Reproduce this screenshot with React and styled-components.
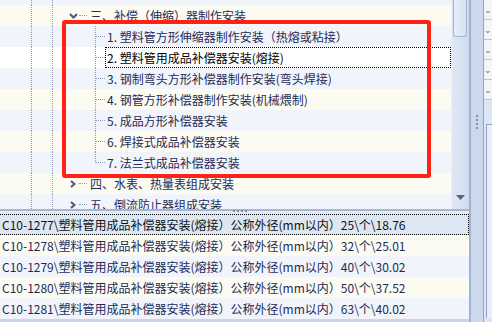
import React from 'react'
import styled, {createGlobalStyle} from 'styled-components'

const GlobalStyle = createGlobalStyle`
  html, body {
    margin: 0;
    padding: 0;
    background: #fff;
  }
  body {
    font-family: "Noto Sans CJK SC", "Liberation Sans", sans-serif;
    font-size: 12px;
  }
`

const stripe = {
  blue: '#f1f4fb',
  beige: '#fbfbf2',
  selected: '#ffffff',
}

const Window = styled.div`
  position: relative;
  display: flex;
  width: 492px;
  height: 322px;
  overflow: hidden;
  background: #cfdcee;
`

const MainPane = styled.div`
  display: flex;
  flex-direction: column;
  width: 473px;
  border-right: 2px solid #a2b3d0;
  background: #fff;
`

const TreePane = styled.div`
  display: flex;
  height: 209px;
`

const TreeBody = styled.div`
  flex: 1;
  overflow: hidden;
`

/* scroll offset of the tree, first row is half hidden */
const TreeScroll = styled.div`
  margin-top: -16px;
`

const TreeRow = styled.div`
  display: flex;
  align-items: center;
  height: 21px;
  background: ${p => stripe[p.$tone]};
  color: #1d2c58;
  white-space: nowrap;
`

const Blank = styled.span`
  flex: none;
  width: ${p => p.$w}px;
  align-self: stretch;
`

const Guide = styled.span`
  flex: none;
  width: ${p => p.$w}px;
  align-self: stretch;
  border-left: 1px dotted #8d9cc2;
  box-sizing: border-box;
`

const Expander = styled.span`
  flex: none;
  display: flex;
  align-items: center;
  justify-content: flex-end;
  width: 26px;
  height: 21px;
  padding-right: 1px;
  box-sizing: border-box;
`

const Stub = styled.span`
  flex: none;
  width: 8px;
  margin-right: 1px;
  border-top: 1px dotted #8d9cc2;
`

const Branch = styled.span`
  flex: none;
  position: relative;
  width: 10px;
  align-self: stretch;

  &::before {
    content: '';
    position: absolute;
    left: 0;
    top: 0;
    height: ${p => (p.$last ? '11px' : '100%')};
    border-left: 1px dotted #8d9cc2;
  }
  &::after {
    content: '';
    position: absolute;
    left: 1px;
    top: 10px;
    width: 9px;
    border-top: 1px dotted #8d9cc2;
  }
`

const Label = styled.span`
  flex: ${p => (p.$selected ? 1 : 'none')};
  display: flex;
  align-items: center;
  align-self: stretch;
  padding-left: 1px;
  border: 1px dotted ${p => (p.$selected ? '#000' : 'transparent')};
  color: ${p => (p.$selected ? '#000' : 'inherit')};
`

const ScrollBar = styled.div`
  flex: none;
  display: flex;
  flex-direction: column;
  width: 17px;
  background: linear-gradient(to right, #dfe8f4, #d0dcee);
  border-left: 1px solid #e9eff8;
`

const Thumb = styled.div`
  height: 36px;
  margin: 0 2px 0 1px;
  border: 1px solid #a3b5d4;
  border-top: none;
  border-radius: 0 0 3px 3px;
  background: linear-gradient(to right, #e7eef8, #d6e1f1);
`

const ScrollEnd = styled.div`
  margin-top: auto;
  height: 14px;
  display: flex;
  justify-content: center;
  align-items: flex-start;
`

const HSplitter = styled.div`
  display: flex;
  justify-content: center;
  height: 3px;
  border-top: 2px solid #a6b6d2;
  background: #e4ebf5;
  padding-left: 10px;
`

const Grip = styled.div`
  display: flex;
  flex-direction: ${p => (p.$vertical ? 'column' : 'row')};
  gap: 2px;
  margin-top: ${p => (p.$vertical ? '115px' : '-1px')};
  & > i {
    display: block;
    width: 2px;
    height: 2px;
    background: #7e92b8;
  }
`

const ListPane = styled.div`
  flex: 1;
  display: flex;
  flex-direction: column;
  background: #f1f4fb;
  border-bottom: 3px solid #c9d6ea;
`

const ListRow = styled.div`
  display: flex;
  align-items: center;
  height: 21px;
  padding-left: 2px;
  box-sizing: border-box;
  background: ${p => (p.$selected ? '#dde7f4' : stripe[p.$tone])};
  border: 1px dotted ${p => (p.$selected ? '#000' : 'transparent')};
  border-left-width: 0;
  color: ${p => (p.$selected ? '#111' : '#1d2c58')};
  white-space: nowrap;
`

const VSplitter = styled.div`
  flex: none;
  display: flex;
  justify-content: center;
  width: 12px;
  background: #ccd9ec;
  border-right: 1px solid #8fa4c7;
`

const SidePanel = styled.div`
  flex: 1;
  display: flex;
  flex-direction: column;
  background: #dde6f3;
`

const SideCell = styled.div`
  height: 19px;
  border-bottom: 1px solid #b7c4da;
  background: #f3f5f9;
  color: #5b6a8c;
  font-size: 9px;
  line-height: 19px;
`

const SideBox = styled.div`
  flex: 1;
  margin: 24px 0 4px 2px;
  border-left: 1px solid #8fa4c7;
  border-top: 1px solid #8fa4c7;
  background: #e9eef6;
`

const Highlight = styled.div`
  position: absolute;
  left: 62px;
  top: 20px;
  width: 369px;
  height: 158px;
  border: 4px solid #ff2216;
  border-radius: 3px;
  box-sizing: border-box;
  pointer-events: none;
`

const ChevronDown = () => (
  <svg width="9" height="6" viewBox="0 0 9 6">
    <path d="M1 1 L4.5 4.5 L8 1" fill="none" stroke="#4b587a" strokeWidth="2" />
  </svg>
)

const ChevronRight = () => (
  <svg width="6" height="8" viewBox="0 0 6 8" style={{marginRight: 2}}>
    <path d="M1 1 L4.5 4 L1 7" fill="none" stroke="#4b587a" strokeWidth="2" />
  </svg>
)

const tree = [
  {kind: 'blank'},
  {kind: 'group', label: '三、补偿（伸缩）器制作安装', open: true},
  {kind: 'item', label: '1. 塑料管方形伸缩器制作安装（热熔或粘接）'},
  {kind: 'item', label: '2. 塑料管用成品补偿器安装(熔接)', selected: true},
  {kind: 'item', label: '3. 钢制弯头方形补偿器制作安装(弯头焊接)'},
  {kind: 'item', label: '4. 钢管方形补偿器制作安装(机械煨制)'},
  {kind: 'item', label: '5. 成品方形补偿器安装'},
  {kind: 'item', label: '6. 焊接式成品补偿器安装'},
  {kind: 'item', label: '7. 法兰式成品补偿器安装', last: true},
  {kind: 'group', label: '四、水表、热量表组成安装'},
  {kind: 'group', label: '五、倒流防止器组成安装'},
]

const items = [
  ['C10-1277', '25', '18.76'],
  ['C10-1278', '32', '25.01'],
  ['C10-1279', '40', '30.02'],
  ['C10-1280', '50', '37.52'],
  ['C10-1281', '63', '40.02'],
]

const TreeLine = ({node, index}) => {
  const tone = node.selected ? 'selected' : index % 2 === 0 ? 'blue' : 'beige'
  return (
    <TreeRow $tone={tone}>
      <Blank $w={31} />
      <Guide $w={21} />
      <Guide $w={node.kind === 'item' ? 43 : 0} />
      {node.kind === 'group' && (
        <>
          <Expander>{node.open ? <ChevronDown /> : <ChevronRight />}</Expander>
          <Stub />
          <Label>{node.label}</Label>
        </>
      )}
      {node.kind === 'item' && (
        <>
          <Branch $last={node.last} />
          <Label $selected={node.selected}>{node.label}</Label>
        </>
      )}
    </TreeRow>
  )
}

const App = () => (
  <>
    <GlobalStyle />
    <Window>
      <MainPane>
        <TreePane>
          <TreeBody>
            <TreeScroll>
              {tree.map((node, i) => (
                <TreeLine key={i} node={node} index={i} />
              ))}
            </TreeScroll>
          </TreeBody>
          <ScrollBar>
            <Thumb />
            <ScrollEnd>
              <svg width="9" height="5" viewBox="0 0 9 5">
                <path d="M0 0 H9 L4.5 5 Z" fill="#56647f" />
              </svg>
            </ScrollEnd>
          </ScrollBar>
        </TreePane>
        <HSplitter>
          <Grip>
            <i /><i /><i /><i />
          </Grip>
        </HSplitter>
        <ListPane>
          {items.map(([code, size, price], i) => (
            <ListRow key={code} $selected={i === 0} $tone={i % 2 === 1 ? 'beige' : 'blue'}>
              {`${code}\\塑料管用成品补偿器安装(熔接）公称外径(mm以内）${size}\\个\\${price}`}
            </ListRow>
          ))}
        </ListPane>
      </MainPane>
      <VSplitter>
        <Grip $vertical>
          <i /><i /><i /><i />
        </Grip>
      </VSplitter>
      <SidePanel>
        {['⌄', '⌄', '⌄', '⌄', '⌄'].map((c, i) => (
          <SideCell key={i}>{c}</SideCell>
        ))}
        <SideBox />
      </SidePanel>
      <Highlight />
    </Window>
  </>
)

export default App
